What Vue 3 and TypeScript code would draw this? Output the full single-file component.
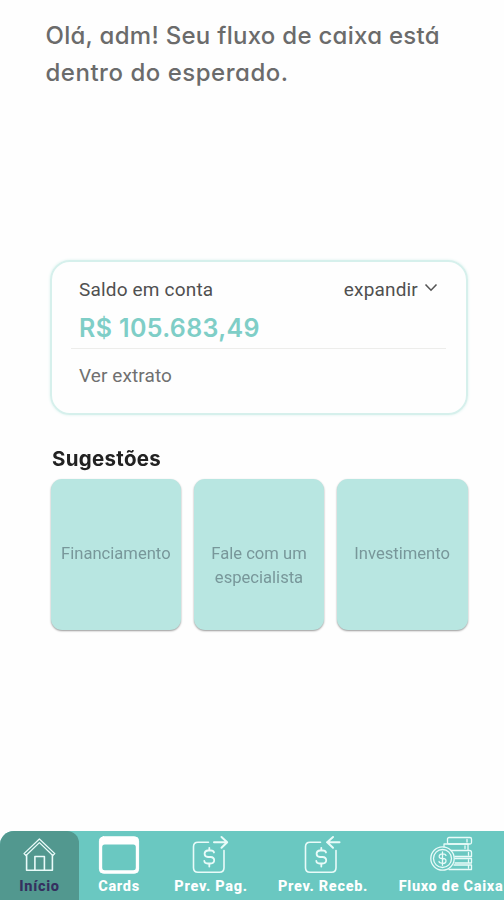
<script setup lang="ts">
interface Tab {
  id: string
  label: string
}

const suggestions: string[] = ['Financiamento', 'Fale com um especialista', 'Investimento']

const tabs: Tab[] = [
  { id: 'home', label: 'Início' },
  { id: 'cards', label: 'Cards' },
  { id: 'pay', label: 'Prev. Pag.' },
  { id: 'receive', label: 'Prev. Receb.' },
  { id: 'flow', label: 'Fluxo de Caixa' },
]
const active = 'home'
</script>

<template>
  <div class="screen">
    <h1 class="greeting">
      <span class="line first">Olá, adm! Seu fluxo de caixa está</span>
      <span class="line second">dentro do esperado.</span>
    </h1>

    <section class="balance">
      <div class="balance-head">
        <span class="balance-title">Saldo em conta</span>
        <span class="expand">
          <span>expandir</span>
          <svg class="chevron" viewBox="0 0 14 10"><path d="M1.500 1.500 7 7.200 12.500 1.500" /></svg>
        </span>
      </div>
      <div class="amount">R$ 105.683,49</div>
      <div class="statement">Ver extrato</div>
    </section>

    <section class="suggestions">
      <h2>Sugestões</h2>
      <div class="tiles">
        <div v-for="s in suggestions" :key="s" class="tile"><span>{{ s }}</span></div>
      </div>
    </section>

    <nav class="tabs">
      <div v-for="t in tabs" :key="t.id" class="tab" :class="[t.id, { active: t.id === active }]">
        <svg v-if="t.id === 'home'" class="icon" viewBox="0.6 0 44 40">
          <path d="M8.600 20.500 6.600 18.600 22 4 37.400 18.600 35.400 20.500 22 7.600Z" stroke-width="1.300" />
          <path d="M9.200 20.500V35.300H35V20.500" />
          <path d="M17.500 35V21.500H27V35" />
        </svg>
        <svg v-else-if="t.id === 'cards'" class="icon" viewBox="0 0 44 40">
          <rect x="2.400" y="1.800" width="39.200" height="36.400" rx="4" fill="#fff" stroke="#fff" stroke-width="1" />
          <rect class="hole" x="5.200" y="9.500" width="33.600" height="25.700" rx="2.500" />
        </svg>
        <svg v-else-if="t.id === 'pay' || t.id === 'receive'" class="icon" viewBox="0 0 44 40">
          <path d="M19.500 7.200H9Q4.500 7.200 4.500 11.700V32.800Q4.500 37.300 9 37.300H30.500Q35 37.300 35 32.800V15.500" />
          <path v-if="t.id === 'pay'" d="M25 7.200H38M32.500 2 38.200 7.200 32.500 12.800" stroke-width="2" />
          <path v-else d="M38.500 7.200H26M32 2 26.200 7.200 32 12.800" stroke-width="2" />
          <path d="M25 17.500Q24.500 15.500 22 15.500H19Q15.600 15.700 15.600 18.800T19 22H21.500Q25.200 22.200 25.200 25.300T21.500 28.500H18.500Q15.600 28.400 15.300 26M20.300 12.800V15.500M20.300 28.500V31.500" stroke-width="1.800" />
        </svg>
        <svg v-else class="icon" viewBox="0 0 44 40">
          <g stroke-width="1.300">
            <rect x="18.500" y="2.500" width="24" height="6.500" rx="1.500" />
            <path d="M15 12V9H39V15.500H22M25 15.500H40.500Q42.500 15.500 42.500 17.500V21.500H26M26 23.500H42.500V28H26M25 30H42.500V34.500H20M38 4.500V7M36 11V13.500M39.500 17.500V20M39.500 25V27M39.500 31V33" />
            <circle cx="13.500" cy="23.500" r="11.700" />
            <circle cx="13.500" cy="23.500" r="9" />
            <path d="M17 20.500Q16.500 18.800 13.500 18.800T10.200 21.200T13.500 23.500T17 26T13.500 28.300T10 26.500M13.500 16.800V30.300" />
          </g>
        </svg>
        <span class="label">{{ t.label }}</span>
      </div>
    </nav>
  </div>
</template>

<style>
body {
  background: #fefefe;
}
</style>

<style scoped>
.screen {
  display: flex;
  flex-direction: column;
  box-sizing: border-box;
  width: 504px;
  height: 900px;
  overflow: hidden;
  padding-top: 17px;
  font-family: Roboto, "Liberation Sans", sans-serif;
  background: #fefefe;
}
.greeting {
  margin: 0;
  height: 243px;
  padding-left: 45.5px;
  box-sizing: border-box;
  font-family: Inter, "Open Sans", sans-serif;
  font-feature-settings: "cv11";
  font-size: 24px;
  font-weight: 530;
  line-height: 37px;
  color: #6b6b6b;
  white-space: nowrap;
}
.line {
  display: block;
}
.first {
  letter-spacing: 0.28px;
}
.second {
  letter-spacing: 0.52px;
}
.balance {
  box-sizing: border-box;
  width: 418px;
  height: 155px;
  margin-left: 50px;
  padding: 15px 20px 0 19px;
  border: 2px solid #d6f0ec;
  border-radius: 20px;
  box-shadow: 0 0 3px #d9f1ed;
  color: #505050;
  flex: none;
}
.balance-head {
  display: flex;
  justify-content: space-between;
  padding: 0 8px;
  font-size: 19px;
  font-weight: 450;
  line-height: 26px;
  letter-spacing: 0.18px;
}
.expand {
  display: flex;
  gap: 6px;
}
.chevron {
  width: 14px;
  height: 10px;
  margin-top: 6px;
  fill: none;
  stroke: #555;
  stroke-width: 1.6;
}
.amount {
  height: 45px;
  padding: 0 8px;
  border-bottom: 1px solid #ededeb;
  font-family: Inter, "Open Sans", sans-serif;
  font-size: 25px;
  font-weight: 600;
  line-height: 50px;
  letter-spacing: 0.36px;
  color: #7fcec7;
}
.statement {
  padding: 14px 8px 0;
  font-size: 19px;
  line-height: 26px;
  letter-spacing: 0.1px;
  color: #707070;
}
.suggestions {
  width: 417px;
  margin: 29px 0 0 50.5px;
  filter: blur(0.7px);
}
h2 {
  margin: 0 0 5px 1.5px;
  font-family: Inter, "Open Sans", sans-serif;
  font-feature-settings: "cv11";
  font-size: 20.5px;
  font-weight: 700;
  line-height: 30px;
  letter-spacing: 0.3px;
  color: #222;
}
.tiles {
  display: grid;
  grid-template-columns: repeat(3, 1fr);
  gap: 12.5px;
}
.tile {
  box-sizing: border-box;
  height: 151px;
  padding: 63px 8px 0;
  border-radius: 11px;
  background: #b8e6e1;
  box-shadow: 0 1px 2px rgba(0, 0, 0, 0.4);
  font-size: 16.6px;
  line-height: 24px;
  text-align: center;
  color: #78979a;
}
.tabs {
  display: flex;
  width: 519px;
  height: 69px;
  margin-top: auto;
  flex: none;
  border-radius: 14px 0 0 0;
  background: #6ac8c1;
}
.tab {
  display: flex;
  flex-direction: column;
  align-items: center;
  box-sizing: border-box;
  padding-top: 4px;
  flex: none;
  color: #fff;
}
.home { width: 79px; }
.cards { width: 80px; }
.pay { width: 104px; }
.receive { width: 120px; }
.flow { width: 136px; }
.active {
  border-radius: 14px 12px 0 0;
  background: #52988f;
  color: #35305f;
}
.icon {
  width: 44px;
  height: 40px;
  fill: none;
  stroke: #e9fbf9;
  stroke-width: 1.6;
  stroke-linecap: round;
  stroke-linejoin: round;
}
.hole {
  fill: #6ac8c1;
  stroke: none;
}
.label {
  margin-top: 3px;
  font-size: 14.5px;
  font-weight: 800;
  line-height: 18px;
  letter-spacing: 0.7px;
  white-space: nowrap;
}
</style>
